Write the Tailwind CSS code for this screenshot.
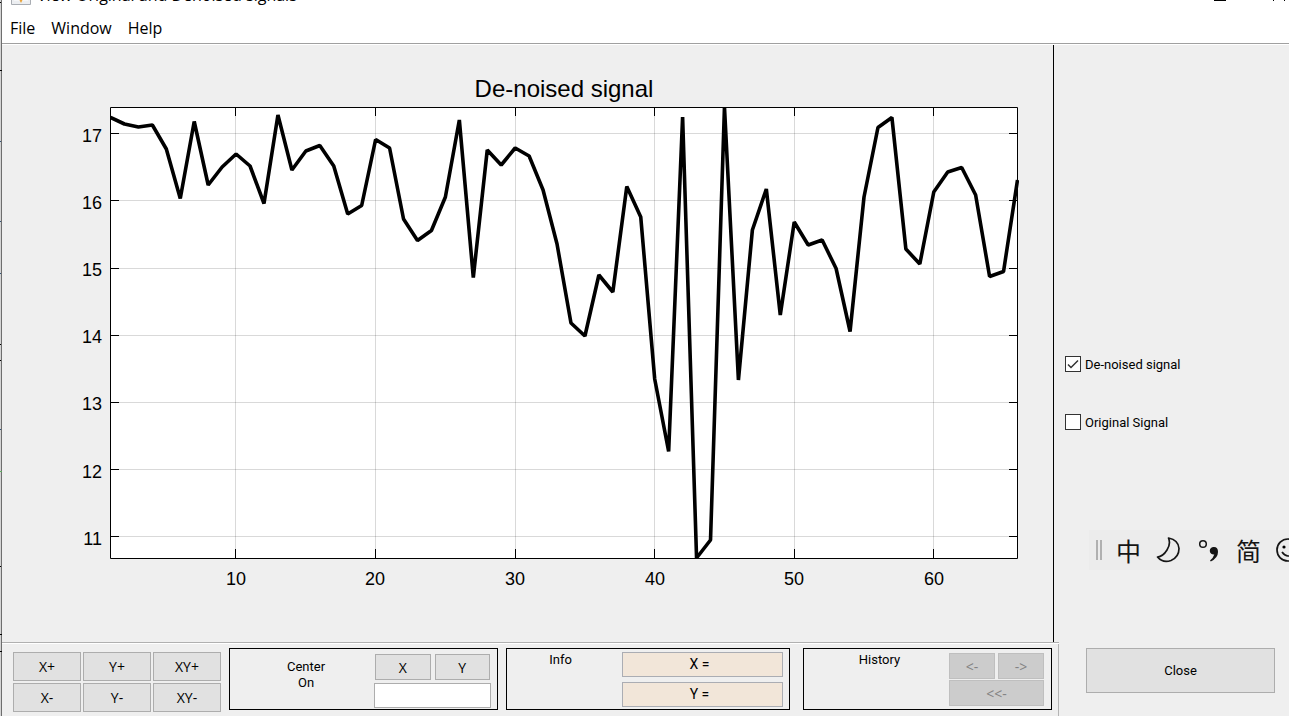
<!DOCTYPE html>
<html lang="en">
<head>
<meta charset="utf-8">
<title>View Original and Denoised signals</title>
<script src="https://cdn.jsdelivr.net/npm/@tailwindcss/browser@4"></script>
</head>
<body class="h-screen overflow-hidden flex bg-[#efefef] text-black font-['Roboto','Liberation_Sans',sans-serif] text-[13px]">
<svg class="w-[2px] h-full shrink-0 bg-[#d4d4d4]" viewBox="0 0 2 716" preserveAspectRatio="none" aria-hidden="true"><path d="M1.500 0v716" stroke="#6e6e6e"/><path d="M0 2.500h1M0 70.500h2M0 344.500h1M0 360.500h1M0 566.500h1M0 634.500h2M0 651.500h2" stroke="#000"/><path d="M0 141.500h1M0 221.500h1M0 273.500h1M0 429.500h1" stroke="#357"/><path d="M0 471.500h2" stroke="#5fae5f"/></svg>
<div class="flex-1 min-w-0 flex flex-col">
  <header class="h-[14px] shrink-0 overflow-hidden bg-white flex items-end">
    <svg class="ml-[9px] mb-[9px] w-5 h-5 shrink-0" viewBox="0 0 20 20"><path d="M.5 0v19.500h19V0z" fill="#eceef1" stroke="#a9adb3"/><path d="M3 0h14v16H3z" fill="#f6f7f9"/><path d="M5 10l5-7 4 9-2 2-2 4-2-4z" fill="#e9a43a"/></svg>
    <h1 class="ml-[6px] mb-[7px] text-[16px] leading-6 font-['Open_Sans',sans-serif] whitespace-nowrap">View Original and Denoised signals</h1>
    <div class="ml-auto mr-1 mb-[13px] flex gap-[47px] items-end" aria-hidden="true"><span class="w-3 h-3 border border-black"></span><svg class="w-3 h-3" viewBox="0 0 12 12"><path d="M0 0L12 12M12 0L0 12" stroke="#000"/></svg></div>
  </header>
  <nav class="h-[29px] shrink-0 bg-white flex items-center gap-4 pl-2 pb-[2px] text-[16px] font-['Open_Sans',sans-serif]">
    <button>File</button><button>Window</button><button>Help</button>
  </nav>
  <div class="h-[2px] shrink-0 border-t border-[#a0a0a0] bg-white"></div>
  <div class="flex-1 min-h-0 flex">
    <main class="flex-1 min-w-0 flex flex-col">
      <section class="flex-1 min-h-0 mr-[5px] border-r border-black">
        <svg class="w-full h-full block" viewBox="2 45 1051 597" font-family="Liberation Sans, sans-serif" font-size="18" role="img" aria-label="De-noised signal chart">
          <rect x="110.500" y="107.500" width="907" height="451" fill="#fff"/>
          <path stroke="#000" stroke-opacity=".15" fill="none" d="M110 133.500h907M110 200.500h907M110 268.500h907M110 335.500h907M110 402.500h907M110 469.500h907M110 536.500h907M235.500 108v450M375.500 108v450M515.500 108v450M654.500 108v450M794.500 108v450M933.500 108v450"/>
          <path stroke="#000" fill="none" d="M110.500 107.500h907v451h-907zM110 133.500h9M110 200.500h9M110 268.500h9M110 335.500h9M110 402.500h9M110 469.500h9M110 536.500h9M1018 133.500h-9M1018 200.500h-9M1018 268.500h-9M1018 335.500h-9M1018 402.500h-9M1018 469.500h-9M1018 536.500h-9M235.500 107v9M375.500 107v9M515.500 107v9M654.500 107v9M794.500 107v9M933.500 107v9M235.500 558v-9M375.500 558v-9M515.500 558v-9M654.500 558v-9M794.500 558v-9M933.500 558v-9"/>
          <clipPath id="plot"><rect x="110" y="107" width="909" height="453"/></clipPath>
          <polyline id="signal" clip-path="url(#plot)" fill="none" stroke="#000" stroke-width="3.600" stroke-linejoin="bevel"/>
          <text x="564" y="97" font-size="24" text-anchor="middle">De-noised signal</text>
          <g text-anchor="end"><text x="102" y="142">17</text><text x="102" y="209">16</text><text x="102" y="276">15</text><text x="102" y="343">14</text><text x="102" y="410">13</text><text x="102" y="478">12</text><text x="102" y="545">11</text></g>
          <g text-anchor="middle"><text x="236" y="585">10</text><text x="375" y="585">20</text><text x="515" y="585">30</text><text x="655" y="585">40</text><text x="794" y="585">50</text><text x="934" y="585">60</text></g>
        </svg>
      </section>
      <div class="h-[2px] shrink-0 border-t border-[#b0b0b0] bg-white"></div>
      <section class="h-[72px] shrink-0 flex items-start gap-2 pl-[11px] pt-1 pr-[6px] border-r border-[#b4b4b4]">
        <div class="w-[208px] mt-1 grid grid-cols-3 gap-[2px] text-[14px] font-['Open_Sans',sans-serif]">
          <button class="h-[29px] bg-[#e1e1e1] border border-[#adadad]">X+</button><button class="h-[29px] bg-[#e1e1e1] border border-[#adadad]">Y+</button><button class="h-[29px] bg-[#e1e1e1] border border-[#adadad]">XY+</button>
          <button class="h-[29px] bg-[#e1e1e1] border border-[#adadad]">X-</button><button class="h-[29px] bg-[#e1e1e1] border border-[#adadad]">Y-</button><button class="h-[29px] bg-[#e1e1e1] border border-[#adadad]">XY-</button>
        </div>
        <div class="w-[269px] h-[62px] border border-black flex pr-[6px]">
          <label for="center" class="flex-1 pt-[10px] pl-2 text-center leading-4">Center<br>On</label>
          <div class="w-[117px] pt-[5px]">
            <div class="flex gap-1 px-px text-[14px] font-['Open_Sans',sans-serif]"><button class="flex-1 h-[26px] bg-[#e1e1e1] border border-[#adadad]">X</button><button class="flex-1 h-[26px] bg-[#e1e1e1] border border-[#adadad]">Y</button></div>
            <input id="center" type="text" class="block mt-[3px] w-full h-[25px] bg-white border border-[#adadad] px-1">
          </div>
        </div>
        <div class="w-[284px] h-[62px] border border-black flex pr-[6px]">
          <span class="flex-1 text-center pt-[3px] pr-2 leading-4">Info</span>
          <div class="w-[161px] pt-[3px] flex flex-col gap-[5px] text-center text-[14px] leading-[23px]"><output class="block h-[25px] bg-[#f2e6d9] border border-[#abadb3] pr-[6px]">X =</output><output class="block h-[25px] bg-[#f2e6d9] border border-[#abadb3] pr-[6px]">Y =</output></div>
        </div>
        <div class="ml-[5px] flex-1 h-[62px] border border-black flex pr-[7px]">
          <span class="flex-1 text-center pt-[3px] pl-[6px] leading-4">History</span>
          <div class="w-[95px] pt-1 grid grid-cols-2 gap-x-[3px] gap-y-px content-start text-[14px] font-['Open_Sans',sans-serif] text-[#838383]"><button disabled class="h-[26px] bg-[#ccc] border border-[#bfbfbf]">&lt;-</button><button disabled class="h-[26px] bg-[#ccc] border border-[#bfbfbf]">-&gt;</button><button disabled class="col-span-2 h-[26px] bg-[#ccc] border border-[#bfbfbf]">&lt;&lt;-</button></div>
        </div>
      </section>
    </main>
    <aside class="w-[230px] shrink-0 flex flex-col justify-end pb-[23px]">
      <div class="flex flex-col gap-[42px] pl-[6px]">
        <label class="flex items-center gap-1 h-4 leading-[18px]"><input type="checkbox" checked class="peer appearance-none w-4 h-4 bg-white border border-[#333]"><svg class="w-4 h-4 -ml-5 hidden peer-checked:block pointer-events-none" viewBox="0 0 16 16"><path d="M3 8.500l3 3 7-7" fill="none" stroke="#333" stroke-width="1.500"/></svg><span class="pt-[2px]">De-noised signal</span></label>
        <label class="flex items-center gap-1 h-4 leading-[18px]"><input type="checkbox" class="appearance-none w-4 h-4 bg-white border border-[#333]"><span class="pt-[2px]">Original Signal</span></label>
      </div>
      <div class="mt-[100px] ml-[30px] h-10 bg-[#ececec] overflow-hidden flex items-center text-[25px] leading-10 font-['Noto_Sans_CJK_SC',sans-serif] text-[#151515]">
        <span class="ml-[7px] w-[6px] h-5 shrink-0 border-x-2 border-[#b0b0b0]"></span>
        <button class="ml-[14px] w-[25px] shrink-0">中</button>
        <svg class="ml-[15px] w-6 h-[26px] shrink-0" viewBox="0 0 24 26"><path d="M12.500 1Q15 7 11 13Q7 19.500 1.500 20Q7 26.500 15 23.500Q23 20 23 11.500Q22.500 3 12.500 1Z" fill="none" stroke="#151515" stroke-width="1.700" stroke-linejoin="round"/></svg>
        <svg class="ml-[18px] w-5 h-6 shrink-0" viewBox="0 0 20 24"><circle cx="5" cy="6" r="3.300" fill="none" stroke="#151515" stroke-width="1.500"/><path d="M16 9a3.800 3.800 0 1 0 .3 7.500Q15.500 19.500 12 22.500l.8.900Q20 20 20 14Q20 9 16 9z" fill="#151515"/></svg>
        <button class="ml-[18px] w-[25px] shrink-0">简</button>
        <svg class="ml-[15px] w-6 h-6 shrink-0" viewBox="0 0 24 24"><circle cx="12" cy="12" r="11" fill="none" stroke="#151515" stroke-width="1.700"/><circle cx="8" cy="9" r="1.600"/><circle cx="16" cy="9" r="1.600"/><path d="M6 14q6 8 12 0" fill="none" stroke="#151515" stroke-width="1.700"/></svg>
      </div>
      <button class="mt-[78px] ml-[27px] mr-[14px] h-[45px] bg-[#e1e1e1] border border-[#adadad]">Close</button>
    </aside>
  </div>
</div>
<script>
// vertical plot positions of the 66 samples
const ys=[117.5,124,127,125,149,198.5,121.5,185,167,154,166,203.5,115,170,151,145.5,166,214,205.5,139.5,148,219,240.5,230.5,197,120,277.5,150,165,148,156,190,244,323,336,275,292,186.5,217,379,451.5,117,558,540,107,380,230,189,315,222,245,240,268.5,331.5,197,127.5,117.5,249,264,192,172,167.5,195,276.5,271.5,180];
document.getElementById('signal').setAttribute('points',ys.map((y,i)=>(110.5+i*907/65)+','+y).join(' '));
</script>
</body>
</html>
